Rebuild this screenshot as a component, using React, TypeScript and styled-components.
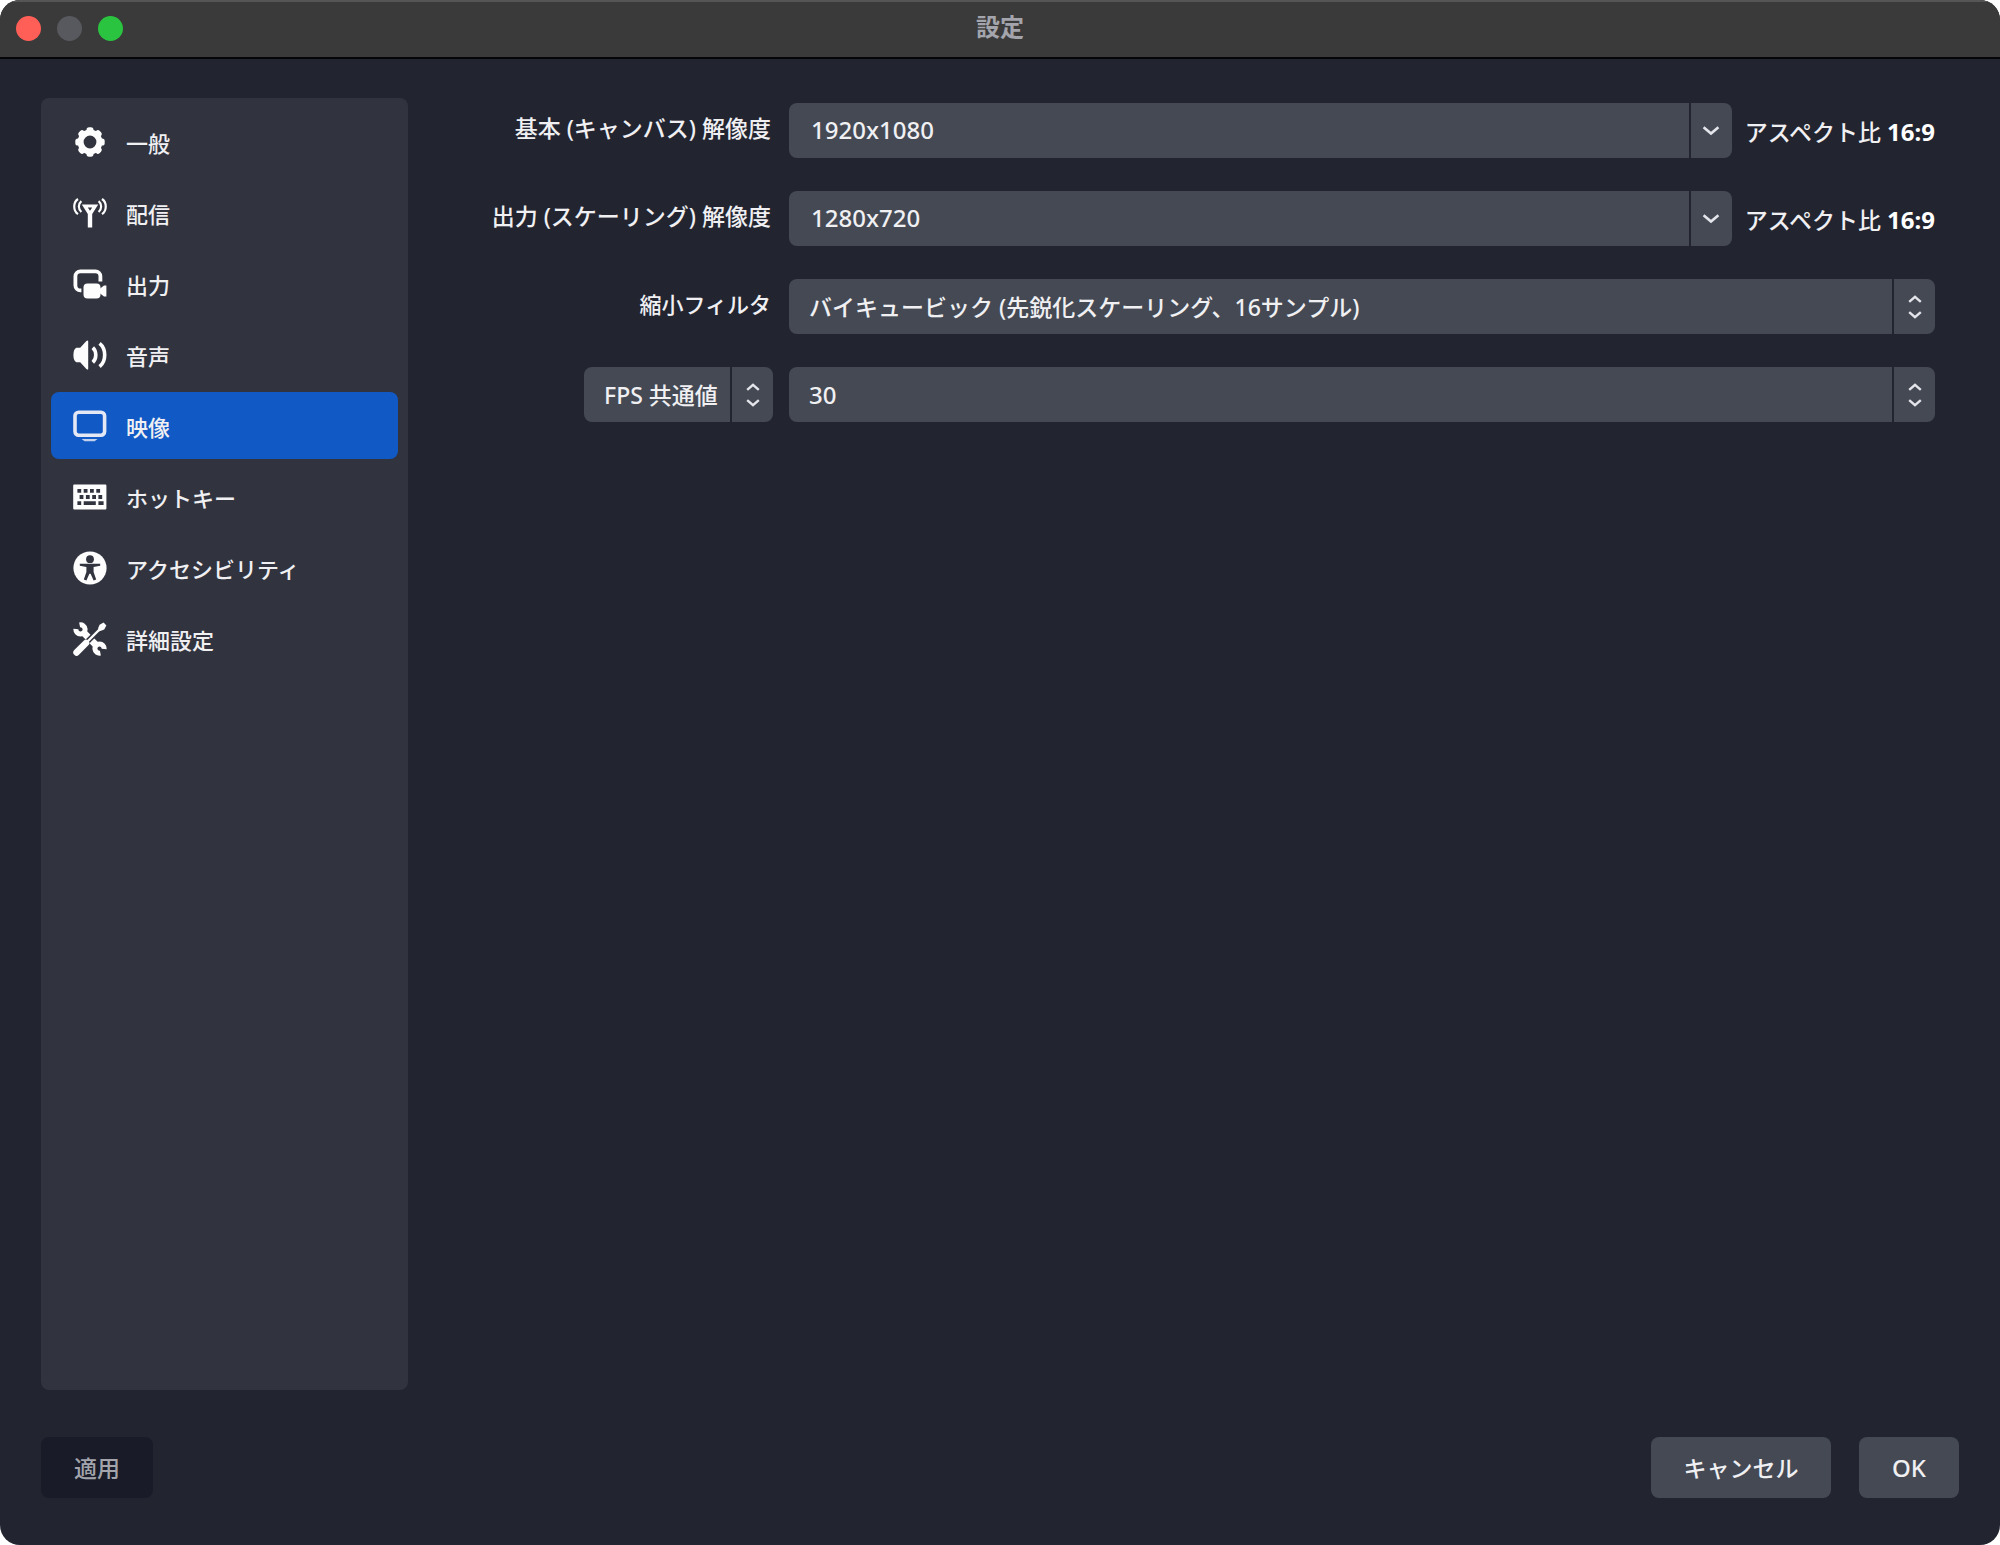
import React, { useState } from "react";
import styled, { createGlobalStyle } from "styled-components";

const color = {
  window: "#222430",
  panel: "#31343f",
  field: "#444954",
  accent: "#1159c4",
  disabled: "#191c28",
  text: "#f0f0f3",
  muted: "#a3a4ac",
};

const GlobalStyle = createGlobalStyle`
  *, *::before, *::after { box-sizing: border-box; }
  html, body { margin: 0; background: #ffffff; }
  body, button, input, select {
    font-family: "Noto Sans", "Noto Sans CJK JP", sans-serif;
    font-weight: 500;
    color: ${color.text};
  }
  button, input, select {
    margin: 0;
    border: 0;
    background: none;
    appearance: none;
  }
`;

const Window = styled.div`
  display: flex;
  flex-direction: column;
  min-height: 100vh;
  overflow: hidden;
  border-radius: 20px;
  background: ${color.window};
`;

const TitleBar = styled.header`
  display: grid;
  grid-template-columns: 1fr auto 1fr;
  align-items: center;
  height: 59px;
  padding: 0 16px 2px;
  border-top: 2px solid #555555;
  border-bottom: 2px solid #050507;
  background: #3a3a3a;
`;

const TrafficLights = styled.div`
  display: flex;
  gap: 16px;
`;

const Light = styled.button<{ $fill: string }>`
  width: 25px;
  height: 25px;
  padding: 0;
  border-radius: 50%;
  background: ${(p) => p.$fill};
`;

const Title = styled.h1`
  margin: 0;
  padding-bottom: 3px;
  font-size: 24px;
  line-height: 32px;
  font-weight: 700;
  color: ${color.muted};
`;

const Body = styled.div`
  display: flex;
  flex: 1;
  padding: 39px 65px 0 41px;
`;

const Sidebar = styled.nav`
  display: flex;
  flex-direction: column;
  flex: none;
  gap: 4px;
  width: 367px;
  padding: 10px;
  border-radius: 8px;
  background: ${color.panel};
`;

const NavItem = styled.button<{ $active: boolean }>`
  display: flex;
  align-items: center;
  gap: 19px;
  height: 67px;
  padding: 0 22px;
  border-radius: 8px;
  font-size: 22px;
  line-height: 32px;
  background: ${(p) => (p.$active ? color.accent : "transparent")};
`;

const NavIcon = styled.svg`
  flex: none;
  width: 34px;
  height: 34px;
  color: #fdfdfe;
`;

const NavText = styled.span`
  padding-top: 2px;
`;

const Form = styled.form`
  display: grid;
  flex: 1;
  grid-template-columns: 365px minmax(0, 1fr);
  grid-auto-rows: 55px;
  align-content: start;
  gap: 33px 16px;
  padding-top: 5px;
  font-size: 23px;
  line-height: 32px;
`;

const FieldLabel = styled.label<{ $small?: boolean }>`
  align-self: center;
  justify-self: end;
  padding: 0 2px 6px 0;
  font-size: ${(p) => (p.$small ? 22 : 23)}px;
`;

const LabelSlot = styled.div`
  justify-self: end;
`;

const FieldRow = styled.div`
  display: flex;
  align-items: center;
  gap: 13px;
`;

const Combo = styled.div`
  display: flex;
  flex: 1;
  gap: 2px;
  height: 55px;
`;

const ComboInput = styled.input`
  flex: 1;
  min-width: 0;
  padding: 0 22px 3px;
  border-radius: 8px 0 0 8px;
  font-size: 24px;
  background: ${color.field};
`;

const ComboButton = styled.button`
  display: grid;
  place-items: center;
  width: 41px;
  padding: 0;
  border-radius: 0 8px 8px 0;
  background: ${color.field};
`;

const Aspect = styled.span`
  padding-top: 2px;
  white-space: nowrap;

  strong {
    font-size: 24px;
    font-weight: 700;
    color: #ffffff;
  }
`;

const SelectBox = styled.div`
  display: grid;
  height: 55px;
`;

const Select = styled.select<{ $large?: boolean }>`
  grid-area: 1 / 1;
  width: 100%;
  padding: 0 55px 0 20px;
  border-radius: 8px;
  font-size: ${(p) => (p.$large ? 24 : 23)}px;
  background: ${color.field};

  option {
    background: ${color.field};
  }
`;

const Stepper = styled.span`
  display: grid;
  grid-area: 1 / 1;
  place-items: center;
  justify-self: end;
  width: 43px;
  border-left: 2px solid ${color.window};
  pointer-events: none;
`;

const Footer = styled.footer`
  display: flex;
  gap: 28px;
  padding: 47px 41px;
`;

const ActionButton = styled.button<{ $width: number; $large?: boolean }>`
  width: ${(p) => p.$width}px;
  height: 61px;
  padding: 0;
  border-radius: 8px;
  font-size: ${(p) => (p.$large ? 24 : 23)}px;
  line-height: 32px;
  background: ${color.field};

  &:disabled {
    margin-right: auto;
    color: ${color.muted};
    background: ${color.disabled};
  }
`;

const Chevron = () => (
  <svg width="18" height="12" viewBox="0 0 18 12" fill="none" stroke="#e4e5ea" strokeWidth="2.6" aria-hidden="true">
    <path d="M1.6 2.2 L9 8.6 L16.4 2.2" />
  </svg>
);

const UpDown = () => (
  <svg width="14" height="26" viewBox="0 0 14 26" fill="none" stroke="#e4e5ea" strokeWidth="2.4" aria-hidden="true">
    <path d="M1.2 7.8 L7 2.8 L12.8 7.8 M1.2 18.2 L7 23.2 L12.8 18.2" />
  </svg>
);

const icons: Record<string, React.ReactNode> = {
  general: (
    <g fill="currentColor">
      <circle cx="17" cy="17" r="9.4" fill="none" stroke="currentColor" strokeWidth="6" />
      {[0, 45, 90, 135, 180, 225, 270, 315].map((a) => (
        <rect key={a} x="13.5" y="2.3" width="7" height="6" rx="2.6" transform={`rotate(${a} 17 17)`} />
      ))}
    </g>
  ),
  stream: (
    <g fill="none" stroke="currentColor">
      <path
        d="M8.8 8.4 H25.2 L19.2 18 V31.4 H14.8 V18 Z M14.8 11.6 L17 14.8 L19.2 11.6 Z"
        fill="currentColor"
        fillRule="evenodd"
        stroke="none"
      />
      <path
        d="M5 3 C0 6.4 0 14.8 5 18.2 M8.4 5.2 C5 8 5 13.2 8.4 16 M29 3 C34 6.4 34 14.8 29 18.2 M25.6 5.2 C29 8 29 13.2 25.6 16"
        strokeWidth="2.2"
      />
    </g>
  ),
  output: (
    <g fill="currentColor">
      <path
        d="M8.4 23.4 H7.4 A5 5 0 0 1 2.4 18.4 V9.4 A5 5 0 0 1 7.4 4.4 H22.4 A5 5 0 0 1 27.4 9.4 V14.4"
        fill="none"
        stroke="currentColor"
        strokeWidth="3.8"
      />
      <rect x="10.5" y="16.4" width="17" height="15.2" rx="4" />
      <path d="M26.5 22 L31 18.6 H33.4 V29.4 H31 L26.5 26 Z" />
    </g>
  ),
  audio: (
    <g fill="currentColor">
      <path d="M3.4 9.8 H7.2 L13.4 3 Q15.2 1.6 15.2 3.6 V30.4 Q15.2 32.4 13.4 31 L7.2 24.2 H3.4 Q0.4 22.6 0.4 17 Q0.4 11.4 3.4 9.8 Z" />
      <path
        d="M19.8 9.6 C23.8 13.4 23.8 20.6 19.8 24.4 M26.6 5.4 C33.4 11 33.4 23 26.6 28.6"
        fill="none"
        stroke="currentColor"
        strokeWidth="3.6"
      />
    </g>
  ),
  video: (
    <g fill="none" stroke="#e3e8f4">
      <rect x="2" y="3.2" width="29.6" height="23" rx="3.6" strokeWidth="3.6" />
      <path d="M8.6 30 H24.6 L21.6 32.2 H11.6 Z" fill="#c3d1ec" stroke="none" />
    </g>
  ),
  hotkeys: (
    <path
      fill="currentColor"
      fillRule="evenodd"
      d="M1.2 4.4 H32.4 Q33.4 4.4 33.4 5.4 V28.6 Q33.4 29.6 32.4 29.6 H1.2 Q0.2 29.6 0.2 28.6 V5.4 Q0.2 4.4 1.2 4.4 Z
         M4.4 9 v3.8 h3.8 v-3.8 Z M10.7 9 v3.8 h3.8 v-3.8 Z M17 9 v3.8 h3.8 v-3.8 Z M23.3 9 v3.8 h3.8 v-3.8 Z
         M6.6 15.1 v3.8 h3.8 v-3.8 Z M12.9 15.1 v3.8 h3.8 v-3.8 Z M19.2 15.1 v3.8 h3.8 v-3.8 Z M25.4 15.1 v3.8 h3.8 v-3.8 Z
         M4.4 21.3 v3.8 h3.8 v-3.8 Z M10.7 21.3 v3.8 h12.1 v-3.8 Z M25.4 21.3 v3.8 h5.2 v-3.8 Z"
    />
  ),
  accessibility: (
    <g>
      <circle cx="17" cy="17" r="16.6" fill="currentColor" />
      <circle cx="17" cy="8.2" r="3.9" fill={color.panel} />
      <path
        d="M6.8 12.8 H27.2 V14.8 L20.6 16 V21 L23.2 28.6 L20.6 29.4 L17.6 22.8 H16.4 L13.4 29.4 L10.8 28.6 L13.4 21 V16 L6.8 14.8 Z"
        fill={color.panel}
      />
    </g>
  ),
  advanced: (
    <g fill="none" stroke="currentColor">
      <path d="M9.6 9.6 L24.4 24.4" strokeWidth="7" />
      <path d="M6.6 2.9 A4.6 4.6 0 1 1 2.9 7" strokeWidth="5" />
      <path d="M27.4 31.1 A4.6 4.6 0 1 1 31.1 27" strokeWidth="5" />
      <path d="M4.4 29.6 L27.6 6.4" stroke={color.panel} strokeWidth="5.4" />
      <path d="M3.6 30.4 L13 21" strokeWidth="6.6" strokeLinecap="round" />
      <path d="M13 21 L28 6" strokeWidth="2.4" />
      <path d="M25.2 6 L26.6 2.8 L30.6 0.6 L33.4 3.4 L31.2 7.4 L28 8.8 L25.6 9.4 Z" fill="currentColor" stroke="none" />
    </g>
  ),
};

const sections = [
  { id: "general", label: "一般" },
  { id: "stream", label: "配信" },
  { id: "output", label: "出力" },
  { id: "audio", label: "音声" },
  { id: "video", label: "映像" },
  { id: "hotkeys", label: "ホットキー" },
  { id: "accessibility", label: "アクセシビリティ" },
  { id: "advanced", label: "詳細設定" },
];

type ResolutionProps = { id: string; label: string; value: string };

const ResolutionField = ({ id, label, value }: ResolutionProps) => (
  <>
    <FieldLabel htmlFor={id}>{label}</FieldLabel>
    <FieldRow>
      <Combo>
        <ComboInput id={id} type="text" defaultValue={value} />
        <ComboButton type="button" aria-label={label}>
          <Chevron />
        </ComboButton>
      </Combo>
      <Aspect>
        アスペクト比 <strong>16:9</strong>
      </Aspect>
    </FieldRow>
  </>
);

type SelectProps = { id?: string; label?: string; value: string; large?: boolean };

const SelectField = ({ id, label, value, large }: SelectProps) => (
  <SelectBox>
    <Select id={id} aria-label={label} $large={large} defaultValue={value}>
      <option>{value}</option>
    </Select>
    <Stepper>
      <UpDown />
    </Stepper>
  </SelectBox>
);

export default function App() {
  const [active, setActive] = useState("video");

  return (
    <>
      <GlobalStyle />
      <Window>
        <TitleBar>
          <TrafficLights>
            <Light type="button" aria-label="閉じる" $fill="#ff5f57" />
            <Light type="button" aria-label="しまう" $fill="#57595f" />
            <Light type="button" aria-label="拡大" $fill="#2ac440" />
          </TrafficLights>
          <Title>設定</Title>
        </TitleBar>
        <Body>
          <Sidebar>
            {sections.map(({ id, label }) => (
              <NavItem
                key={id}
                type="button"
                $active={id === active}
                aria-current={id === active ? "page" : undefined}
                onClick={() => setActive(id)}
              >
                <NavIcon viewBox="0 0 34 34" aria-hidden="true">
                  {icons[id]}
                </NavIcon>
                <NavText>{label}</NavText>
              </NavItem>
            ))}
          </Sidebar>
          <Form>
            <ResolutionField id="base" label="基本 (キャンバス) 解像度" value="1920x1080" />
            <ResolutionField id="scaled" label="出力 (スケーリング) 解像度" value="1280x720" />
            <FieldLabel htmlFor="filter" $small>
              縮小フィルタ
            </FieldLabel>
            <SelectField id="filter" value="バイキュービック (先鋭化スケーリング、16サンプル)" />
            <LabelSlot>
              <SelectField label="FPS の種類" value="FPS 共通値" />
            </LabelSlot>
            <SelectField label="FPS" value="30" large />
          </Form>
        </Body>
        <Footer>
          <ActionButton type="button" $width={112} disabled>
            適用
          </ActionButton>
          <ActionButton type="button" $width={180}>
            キャンセル
          </ActionButton>
          <ActionButton type="button" $width={100} $large>
            OK
          </ActionButton>
        </Footer>
      </Window>
    </>
  );
}
